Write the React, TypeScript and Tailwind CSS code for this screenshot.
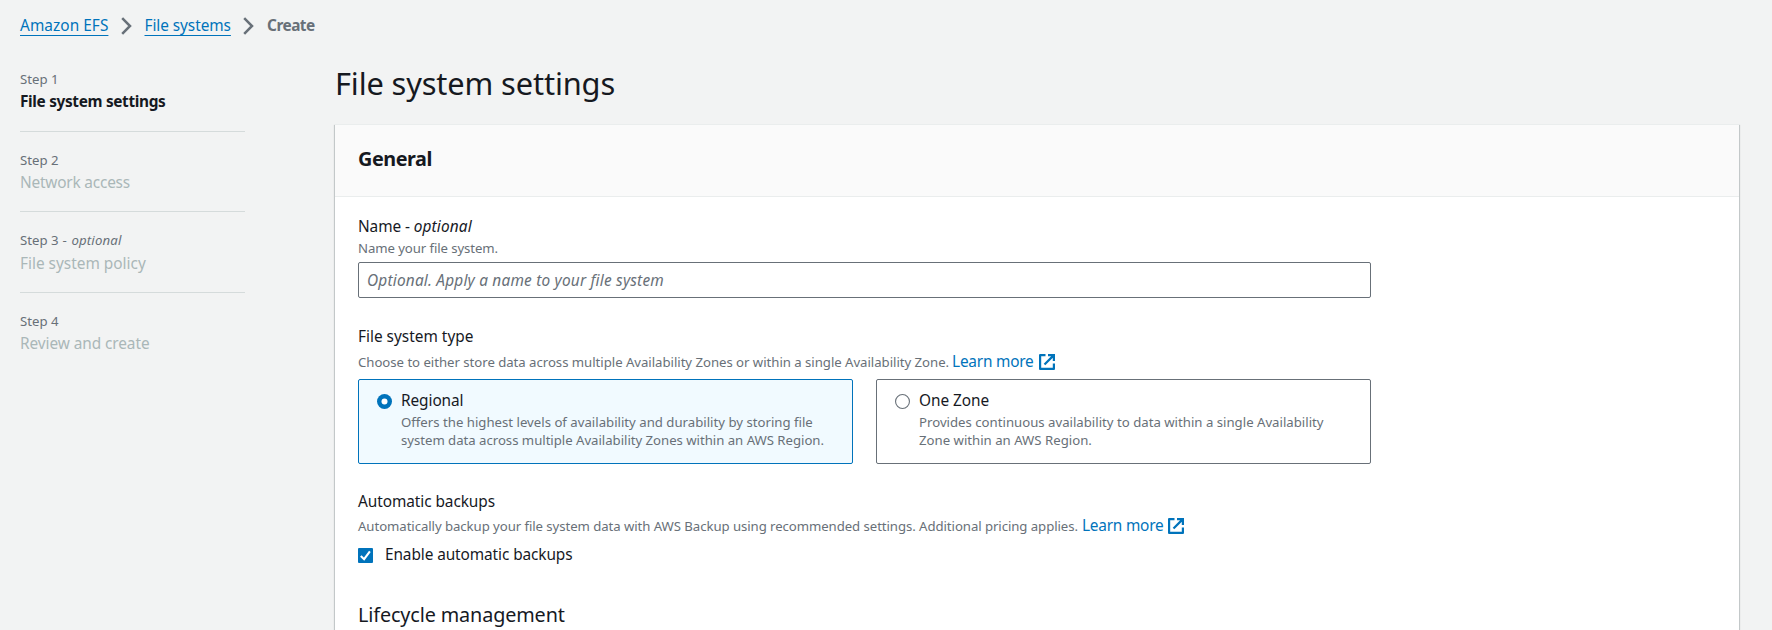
import type { ReactNode } from "react";

const steps = [
  { label: "Step 1", optional: false, name: "File system settings", box: "pb-[17px]", text: "mt-px font-bold text-[#16191f] tracking-[-0.339px]" },
  { label: "Step 2", optional: false, name: "Network access", box: "border-t pt-[19px] pb-4", text: "mt-px text-[#aab7b8] tracking-[-0.2px]" },
  { label: "Step 3", optional: true, name: "File system policy", box: "border-t pt-[19px] pb-4", text: "mt-0.5 text-[#aab7b8]" },
  { label: "Step 4", optional: false, name: "Review and create", box: "border-t pt-[19px]", text: "mt-px text-[#aab7b8] tracking-[-0.077px]" },
];

function Chevron() {
  return (
    <svg width="12" height="18" viewBox="0 0 12 18" fill="none" stroke="#687078" strokeWidth="2.5">
      <path d="M1.2 1.2l7.8 7.8-7.8 7.8" />
    </svg>
  );
}

function LearnMore() {
  return (
    <a className="ml-[3px] inline-flex items-center text-[15.4px] leading-5 text-[#0073bb]">
      <span className="tracking-[-0.218px]">Learn more</span>
      <svg className="ml-[5px]" width="16" height="16" viewBox="0 0 16 16" fill="none" stroke="#0073bb" strokeWidth="2.2">
        <path d="M6.5 1.1H1.1v13.8h13.8V9.5" strokeLinejoin="round" />
        <path d="M9 1.1h5.9V7M14.6 1.4L5.5 10.5" />
      </svg>
    </a>
  );
}

function Radio({ selected }: { selected?: boolean }) {
  return (
    <svg className="mt-1.5 shrink-0" width="15" height="15" viewBox="0 0 15 15">
      {selected ? (
        <>
          <circle cx="7.5" cy="7.5" r="7.5" fill="#0073bb" />
          <circle cx="7.5" cy="7.5" r="3" fill="#fff" />
        </>
      ) : (
        <circle cx="7.5" cy="7.5" r="6.95" fill="#fff" stroke="#687078" strokeWidth="1.1" />
      )}
    </svg>
  );
}

function Tile({ selected, title, children }: { selected?: boolean; title: ReactNode; children: ReactNode }) {
  return (
    <div className={`flex h-[85px] w-[495px] rounded-[2px] border pt-2 pl-[18px] ${selected ? "border-[#0073bb] bg-[#f1faff]" : "border-[#687078] bg-white"}`}>
      <Radio selected={selected} />
      <div className="ml-[9px]">
        <div className="leading-[25px]">{title}</div>
        <div className="whitespace-nowrap text-[13.2px] leading-[18px] text-[#687078]">{children}</div>
      </div>
    </div>
  );
}

export default function App() {
  return (
    <div className="h-[630px] w-[1772px] overflow-hidden bg-[#f2f3f3] font-['Noto_Sans','Open_Sans',sans-serif] text-[15.4px] text-[#16191f]">
      <nav className="flex h-[50px] items-start pt-[13px] pl-5 leading-[25px]">
        <a className="w-[88.5px] whitespace-nowrap text-[#0073bb] underline decoration-1 underline-offset-4 [text-decoration-skip-ink:none] tracking-[0.05px]">Amazon EFS</a>
        <span className="mt-1 ml-3 w-[24px]"><Chevron /></span>
        <a className="w-[86.5px] whitespace-nowrap text-[#0073bb] underline decoration-1 underline-offset-4 [text-decoration-skip-ink:none] tracking-[-0.067px]">File systems</a>
        <span className="mt-1 ml-3 w-[24px]"><Chevron /></span>
        <span className="font-bold tracking-[-0.5px] text-[#687078]">Create</span>
      </nav>
      <div className="flex">
        <aside className="ml-5 w-[225px] pt-5">
          {steps.map((s) => (
            <div key={s.label} className={`border-[#d5dbdb] ${s.box}`}>
              <div className="text-[13.2px] leading-[18px] text-[#687078]">
                {s.label}
                {s.optional && <span className="tracking-[0.15px]"><span className="tracking-[0.6px]"> - </span><i>optional</i></span>}
              </div>
              <div className={`leading-[25px] ${s.text}`}>{s.name}</div>
            </div>
          ))}
        </aside>
        <main className="ml-[90px] w-[1404px] pt-[13px]">
          <h1 className="text-[30.8px] leading-10 tracking-[-0.139px]">File system settings</h1>
          <section className="mt-[21px] h-[520px] border-t border-[#eaeded] bg-white shadow-[0_1px_1px_0_rgba(0,28,36,0.3),1px_1px_1px_0_rgba(0,28,36,0.15),-1px_1px_1px_0_rgba(0,28,36,0.15)]">
            <header className="h-[72px] border-b border-[#eaeded] bg-[#fafafa] pt-[21px] pl-[23px]">
              <h2 className="text-[19.8px] leading-[25px] font-bold tracking-[-0.427px]">General</h2>
            </header>
            <div className="pt-[17px] pl-[23px]">
              <div className="leading-[25px] tracking-[-0.1px]">Name - <i className="tracking-[0.15px]">optional</i></div>
              <div className="text-[13.2px] leading-[18px] tracking-[-0.09px] text-[#687078]">Name your file system.</div>
              <div className="mt-[5px] h-9 w-[1013px] rounded-[2px] border border-[#687078] pt-[5px] pl-2 leading-[25px] text-[#687078] italic tracking-[0.204px]">
                Optional. Apply a name to your file system
              </div>
              <div className="mt-[26px] leading-[25px]">File system type</div>
              <div className="mt-[3px] flex h-5 text-[13.2px] leading-5 text-[#687078]">
                <span className="tracking-[-0.034px]">Choose to either store data across multiple Availability Zones or within a single Availability Zone.</span>
                <LearnMore />
              </div>
              <div className="mt-[7px] flex gap-[23px]">
                <Tile selected title={<span className="tracking-[-0.077px]">Regional</span>}>
                  <div>Offers the highest levels of availability and durability by storing file</div>
                  <div className="tracking-[-0.028px]">system data across multiple Availability Zones within an AWS Region.</div>
                </Tile>
                <Tile title={<span className="tracking-[-0.065px]">One Zone</span>}>
                  <div>Provides continuous availability to data within a single Availability</div>
                  <div>Zone within an AWS Region.</div>
                </Tile>
              </div>
              <div className="mt-[25px] leading-[25px] tracking-[-0.071px]">Automatic backups</div>
              <div className="mt-0.5 flex h-5 text-[13.2px] leading-5 text-[#687078]">
                <span className="mr-px tracking-[-0.066px]">Automatically backup your file system data with AWS Backup using recommended settings. Additional pricing applies.</span>
                <LearnMore />
              </div>
              <div className="mt-1.5 flex h-6 leading-[25px]">
                <svg className="mt-1.5" width="15" height="15" viewBox="0 0 15 15">
                  <rect width="15" height="15" rx="1" fill="#0073bb" />
                  <path d="M2.8 8l3.3 3.2 5.8-7.8" fill="none" stroke="#fff" strokeWidth="2.1" />
                </svg>
                <span className="ml-[12px] tracking-[-0.097px]">Enable automatic backups</span>
              </div>
              <h3 className="mt-9 text-[19.8px] leading-[25px] tracking-[-0.12px]">Lifecycle management</h3>
            </div>
          </section>
        </main>
      </div>
    </div>
  );
}
